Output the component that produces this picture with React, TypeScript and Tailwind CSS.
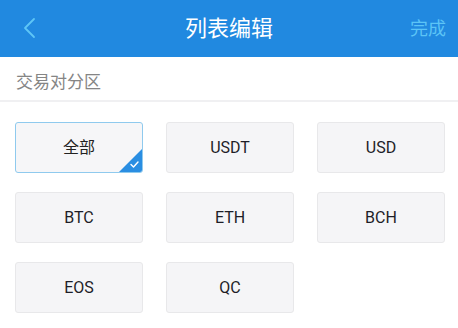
import React from "react";

const items = ["全部", "USDT", "USD", "BTC", "ETH", "BCH", "EOS", "QC"];

export default function App() {
  return (
    <div className="w-[458px] h-[328px] bg-white overflow-hidden" style={{ fontFamily: '"Roboto", "Noto Sans CJK SC", sans-serif' }}>
      <div className="h-[57px] bg-[#2189e0] flex items-center justify-between px-[22px] relative">
        <svg width="16" height="22" viewBox="0 0 16 22" className="mt-[-1px]">
          <path d="M12 2 L3 11 L12 20" fill="none" stroke="#5ec6f6" strokeWidth="1.8" strokeLinecap="round" strokeLinejoin="round" />
        </svg>
        <div className="absolute left-0 right-0 text-center text-white text-[22px] leading-none pointer-events-none">列表编辑</div>
        <div className="text-[#5cc4f6] text-[18px] leading-none mr-[-10px]">完成</div>
      </div>
      <div className="h-[45px] pt-[8px] flex items-center px-[16px] text-[17px] text-[#858585] border-b-2 border-[#f0f0f2]">交易对分区</div>
      <div className="grid grid-cols-[128px_128px_128px] gap-x-[23px] gap-y-[19px] px-[15px] pt-[20px]">
        {items.map((t, i) => (
          <div
            key={t}
            className={
              i === 0
                ? "relative h-[51px] rounded-[3px] border border-[#8fcaee] bg-[#f6f6f8] flex items-center justify-center text-[16px] text-[#222] overflow-hidden"
                : "h-[51px] rounded-[3px] border border-[#e8e8ea] bg-[#f5f5f7] flex items-center justify-center text-[16px] text-[#1e1e28]"
            }
          >
            {t}
            {i === 0 && (
              <svg width="23" height="23" viewBox="0 0 23 23" className="absolute right-0 bottom-0">
                <path d="M23 0 L23 23 L0 23 Z" fill="#2a8ee2" />
                <path d="M12 15.5 L14.5 18 L19 13" fill="none" stroke="#ffffff" strokeWidth="1.4" strokeLinecap="round" strokeLinejoin="round" />
              </svg>
            )}
          </div>
        ))}
      </div>
    </div>
  );
}
